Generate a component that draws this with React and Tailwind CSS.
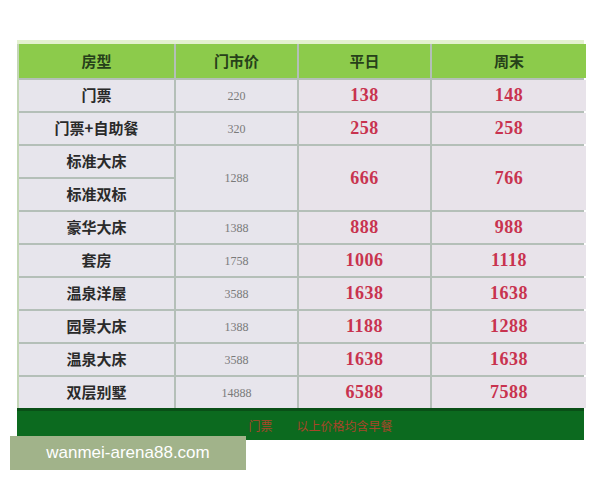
import React from "react";

const rows = [
  { name: "门票", price: "220", weekday: "138", weekend: "148" },
  { name: "门票+自助餐", price: "320", weekday: "258", weekend: "258" },
  { name: "豪华大床", price: "1388", weekday: "888", weekend: "988" },
  { name: "套房", price: "1758", weekday: "1006", weekend: "1118" },
  { name: "温泉洋屋", price: "3588", weekday: "1638", weekend: "1638" },
  { name: "园景大床", price: "1388", weekday: "1188", weekend: "1288" },
  { name: "温泉大床", price: "3588", weekday: "1638", weekend: "1638" },
  { name: "双层别墅", price: "14888", weekday: "6588", weekend: "7588" },
];

const cjk = { fontFamily: '"Noto Sans CJK SC", "Noto Sans", sans-serif' };
const serif = { fontFamily: '"Liberation Serif", "Noto Sans CJK SC", serif' };

function HeadCell({ children }) {
  return (
    <div className="flex items-center justify-center bg-[#8ccb4b] text-[15px] font-bold text-[#26401a]" style={cjk}>
      {children}
    </div>
  );
}

function NameCell({ children }) {
  return (
    <div className="flex items-center justify-center bg-[#e7e5ec] text-[15px] font-bold text-[#2a2a2a]" style={cjk}>
      {children}
    </div>
  );
}

function PriceCell({ children, className = "" }) {
  return (
    <div className={"flex items-center justify-center bg-[#e7e5ec] text-[12px] text-[#7a7a7a] " + className} style={serif}>
      {children}
    </div>
  );
}

function RedCell({ children, className = "" }) {
  return (
    <div className={"flex items-center justify-center bg-[#e8e3ea] text-[18px] font-bold tracking-wide text-[#c8334f] " + className} style={serif}>
      {children}
    </div>
  );
}

function Row({ r }) {
  return (
    <>
      <NameCell>{r.name}</NameCell>
      <PriceCell>{r.price}</PriceCell>
      <RedCell>{r.weekday}</RedCell>
      <RedCell>{r.weekend}</RedCell>
    </>
  );
}

export default function App() {
  return (
    <div className="relative w-[600px] h-[480px] bg-white overflow-hidden">
      <div className="pt-[40px] pl-[17px]">
        <div className="w-[567px] h-[4px] bg-[#e3f1cf]" />
        <div className="w-[567px] grid grid-cols-[155px_121px_131px_154px] grid-rows-[34px_repeat(10,31px)] gap-[2px] bg-[#b4bfb8] border-l-[2px] border-[#c3d6b6]">
          {/* 表头 */}
          <HeadCell>房型</HeadCell>
          <HeadCell>门市价</HeadCell>
          <HeadCell>平日</HeadCell>
          <HeadCell>周末</HeadCell>

          <Row r={rows[0]} />
          <Row r={rows[1]} />

          {/* 标准间合并 */}
          <NameCell>标准大床</NameCell>
          <PriceCell className="row-span-2">1288</PriceCell>
          <RedCell className="row-span-2">666</RedCell>
          <RedCell className="row-span-2">766</RedCell>
          <NameCell>标准双标</NameCell>

          {rows.slice(2).map((r) => (
            <Row key={r.name} r={r} />
          ))}
        </div>
        <div className="w-[567px] h-[32px] bg-[#0c6a1f] border-t-[3px] border-[#0a4f17] flex items-center justify-center gap-6 pl-[40px]">
          <span className="text-[12px] text-[#a8452a]" style={cjk}>门票</span>
          <span className="text-[12px] text-[#a8452a]" style={cjk}>以上价格均含早餐</span>
        </div>
      </div>

      <div className="absolute left-[10px] top-[436px] w-[236px] h-[34px] bg-[#a1b38a] flex items-center justify-center">
        <span className="text-[17px] text-white" style={{ fontFamily: '"Liberation Sans", Arial, sans-serif' }}>
          wanmei-arena88.com
        </span>
      </div>
    </div>
  );
}
